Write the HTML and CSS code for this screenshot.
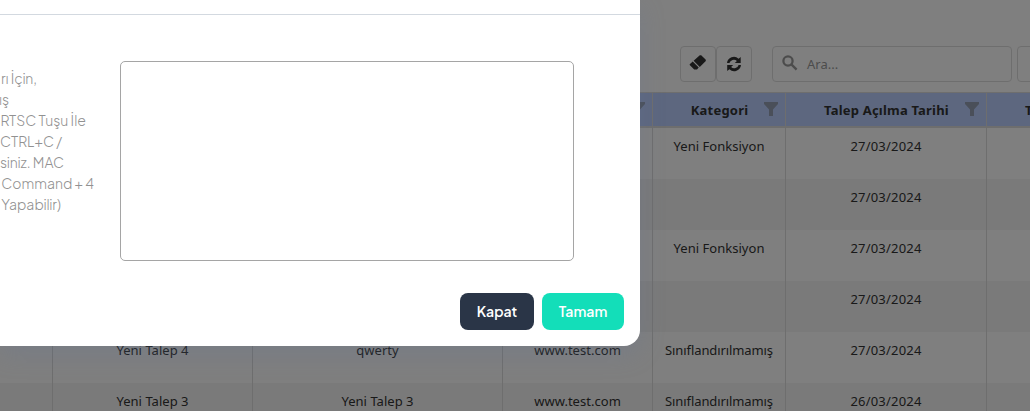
FILE: index.html
```html
<!DOCTYPE html>
<html lang="tr">
<head>
<meta charset="utf-8">
<title>Talepler</title>
<link rel="stylesheet" href="styles.css">
</head>
<body>
<div class="page">
  <div class="toolbar">
    <button class="tool"><svg width="18" height="18" viewBox="0 0 18 18"><path d="M10.8 1.2h1.400l4.600 4.600v1.300l-6 5.800-6.200-6.200zM3.700 7.600l6 6-1.700 1.900H5.200L.7 11v-.7z"/></svg></button>
    <button class="tool"><svg width="18" height="18" viewBox="0 0 18 18"><path d="M2 8.100a6.900 6.900 0 0 1 11.600-4.300L15.700 2v6.100H9.800l2.100-2.200A4.600 4.600 0 0 0 4.400 8.100zM16 9.900a6.900 6.900 0 0 1-11.600 4.300L2.200 16V9.900h6l-2.100 2.200a4.600 4.600 0 0 0 7.500-2.200z"/></svg></button>
    <div class="search"><svg width="16" height="16" viewBox="0 0 16 16"><circle cx="6" cy="6" r="4.6"/><path d="M9.400 9.400l5.200 5.200"/></svg><span>Ara...</span></div>
    <div class="extra"></div>
  </div>
  <div class="grid">
    <div class="row head">
      <div></div><div></div><div></div>
      <div><svg class="filter" width="14" height="14" viewBox="0 0 14 14"><path d="M0 0h14v2L9 7.500V14H5V7.500L0 2z"/></svg></div>
      <div><span>Kategori</span><svg class="filter" width="14" height="14" viewBox="0 0 14 14"><path d="M0 0h14v2L9 7.500V14H5V7.500L0 2z"/></svg></div>
      <div><span>Talep Açılma Tarihi</span><svg class="filter" width="14" height="14" viewBox="0 0 14 14"><path d="M0 0h14v2L9 7.500V14H5V7.500L0 2z"/></svg></div>
      <div class="last">T</div>
    </div>
    <div class="row"><div></div><div></div><div></div><div></div><div>Yeni Fonksiyon</div><div class="date">27/03/2024</div><div></div></div>
    <div class="row alt"><div></div><div></div><div></div><div></div><div></div><div class="date">27/03/2024</div><div></div></div>
    <div class="row"><div></div><div></div><div></div><div></div><div>Yeni Fonksiyon</div><div class="date">27/03/2024</div><div></div></div>
    <div class="row alt"><div></div><div></div><div></div><div></div><div></div><div class="date">27/03/2024</div><div></div></div>
    <div class="row"><div></div><div>Yeni Talep 4</div><div>qwerty</div><div>www.test.com</div><div class="tight">Sınıflandırılmamış</div><div class="date">27/03/2024</div><div></div></div>
    <div class="row alt"><div></div><div>Yeni Talep 3</div><div>Yeni Talep 3</div><div>www.test.com</div><div class="tight">Sınıflandırılmamış</div><div class="date">26/03/2024</div><div></div></div>
  </div>
</div>
<div class="overlay">
  <div class="modal">
    <div class="modal-head"></div>
    <div class="modal-body">
      <div class="note">
        <p class="n1">rı İçin,</p><p class="n2">ış</p><p class="n3">RTSC Tuşu İle</p><p class="n4">CTRL+C /</p><p class="n5">siniz. MAC</p><p class="n6">Command + 4</p><p class="n7">Yapabilir)</p>
      </div>
      <div class="field"></div>
    </div>
    <div class="actions"><button class="btn dark">Kapat</button><button class="btn mint">Tamam</button></div>
  </div>
</div>
</body>
</html>
```
FILE: styles.css
```css
* { box-sizing: border-box; }
body { margin: 0; width: 1030px; height: 411px; overflow: hidden; position: relative; background: #fff; font-family: "Noto Sans", "Open Sans", sans-serif; }
button { font: inherit; margin: 0; }
.page { height: 411px; overflow: hidden; }
.toolbar { display: flex; height: 92px; padding: 46px 0 0 680px; }
.tool { flex: none; width: 36px; height: 36px; padding: 0; border: 1px solid #ddd; border-radius: 4px; background: #fff; display: flex; align-items: center; justify-content: center; fill: #333; }
.tool svg { margin-top: -2px; }
.tool + .tool svg { margin-top: 0; }
.search { display: flex; align-items: center; flex: none; width: 240px; height: 36px; margin-left: 20px; padding: 0 9px; gap: 9px; border: 1px solid #ddd; border-radius: 4px; color: #999; font-size: 13px; }
.search svg { fill: none; stroke: #999; stroke-width: 2.3; margin-top: -3px; }
.extra { flex: none; width: 60px; height: 36px; margin-left: 5px; border: 1px solid #ddd; border-radius: 4px; }
.grid { width: 1188px; border-top: 1px solid #ddd; }
.row { display: grid; grid-template-columns: 53px 200px 250px 150px 133px 201px 201px; height: 51px; color: #333; font-size: 13px; letter-spacing: .03px; text-align: center; line-height: 20px; }
.row > div { border-right: 1px solid #ddd; padding-top: 8px; white-space: nowrap; }
.row > .date { letter-spacing: .2px; }
.row > .tight { letter-spacing: -.1px; }
.row.alt { background: #f5f5f5; }
.row.head { height: 35px; background: #bacfff; border-bottom: 2px solid #ddd; font-weight: 700; }
.row.head > div { display: grid; grid-template-columns: 22px 1fr 14px; padding: 0 7px 0 0; align-items: center; letter-spacing: .2px; }
.row.head > div.last { display: block; padding: 7px 0 0 38px; text-align: left; }
.row.head span { grid-column: 2; justify-self: center; }
.filter { grid-column: 3; fill: #959fb3; margin-top: -1px; }
.overlay { position: absolute; inset: 0; background: rgba(0,0,0,.5); }
.modal { width: 640px; height: 346px; background: #fff; border-radius: 0 0 16px 0; box-shadow: 0 8px 24px rgba(100,120,150,.28); font-family: "Plus Jakarta Sans", Inter, sans-serif; }
.modal-head { height: 15px; border-bottom: 1px solid #d3d9e0; }
.modal-body { display: flex; padding-top: 46px; height: 246px; }
.note { width: 120px; padding-top: 7px; color: #919191; font-size: 14px; font-weight: 300; line-height: 21px; white-space: nowrap; }
.note p { margin: 0; text-align: right; }
.n1 { width: 37px; }
.n2 { width: 9px; }
.n3 { width: 86px; }
.n4 { width: 62px; }
.n5 { width: 60px; }
.n6 { width: 94px; }
.n7 { width: 61px; }
.note .n2 { direction: rtl; }
.field { width: 454px; height: 200px; border: 1px solid #a5a5a5; border-radius: 5px; }
.actions { display: flex; gap: 8px; justify-content: flex-end; padding: 32px 16px 0 0; }
.btn { height: 37px; padding: 0 0 1px; border: 0; border-radius: 8px; color: #fff; font-size: 14px; font-weight: 600; }
.dark { width: 74px; background: #2a3547; }
.mint { width: 82px; background: #13deb9; }
```
